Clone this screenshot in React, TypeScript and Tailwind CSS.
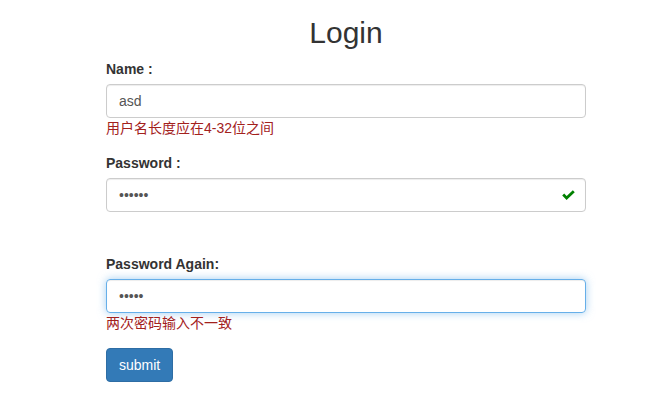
import React from "react";

const font = { fontFamily: '"Liberation Sans", "Noto Sans CJK SC", Arial, sans-serif' };

export default function App() {
  return (
    <div className="min-h-[413px] w-full bg-white text-[14px] leading-[20px] text-[#333]" style={font}>
      <div className="ml-[106px] w-[480px] pt-[16px]">
        <h1 className="text-center text-[30px] leading-[33px] font-normal text-[#333] mb-[10px]">Login</h1>

        <div className="mb-[15px]">
          <label className="block font-bold mb-[5px]">Name :</label>
          <input
            type="text"
            readOnly
            defaultValue="asd"
            className="block w-full h-[34px] px-[12px] rounded-[4px] border border-[#ccc] text-[14px] text-[#555] shadow-[inset_0_1px_1px_rgba(0,0,0,0.075)] outline-none"
          />
          <div className="text-[#a3211c]">用户名长度应在4-32位之间</div>
        </div>

        <div className="mb-[42px]">
          <label className="block font-bold mb-[5px]">Password :</label>
          <div className="relative">
            <input
              type="password"
              readOnly
              defaultValue="aaaaaa"
              className="block w-full h-[34px] px-[12px] pr-[40px] rounded-[4px] border border-[#ccc] text-[14px] text-[#555] shadow-[inset_0_1px_1px_rgba(0,0,0,0.075)] outline-none"
            />
            <svg
              className="absolute right-[11px] top-[12px]"
              width="13"
              height="10"
              viewBox="0 0 13 10"
            >
              <polyline points="1.2,4.6 4.6,8 11.8,1.2" fill="none" stroke="#008000" strokeWidth="2.8" strokeLinecap="butt" strokeLinejoin="miter" />
            </svg>
          </div>
        </div>

        <div className="mb-[15px]">
          <label className="block font-bold mb-[5px]">Password Again:</label>
          <input
            type="password"
            readOnly
            defaultValue="aaaaa"
            className="block w-full h-[34px] px-[12px] rounded-[4px] border border-[#66afe9] text-[14px] text-[#555] shadow-[inset_0_1px_1px_rgba(0,0,0,0.075),0_0_8px_rgba(102,175,233,0.6)] outline-none"
          />
          <div className="text-[#a3211c]">两次密码输入不一致</div>
        </div>

        <button className="h-[34px] px-[12px] rounded-[4px] border border-[#2e6da4] bg-[#337ab7] text-white text-[14px]">
          submit
        </button>
      </div>
    </div>
  );
}
